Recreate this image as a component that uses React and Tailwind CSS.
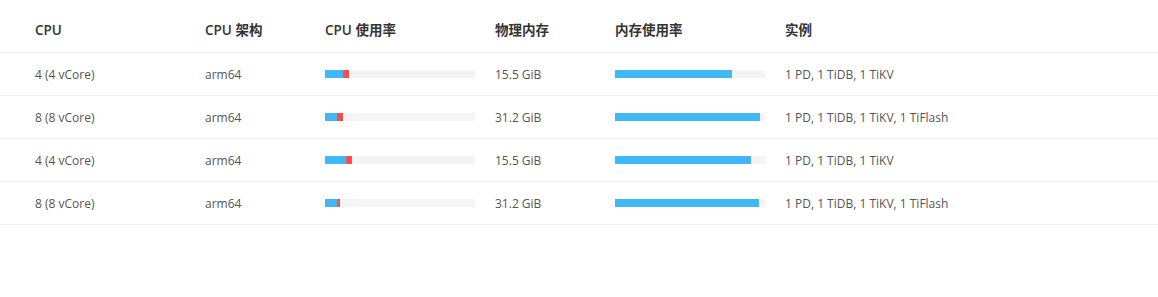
import React from "react";

const rows = [
  { cpu: "4 (4 vCore)", arch: "arm64", cpuA: 18, cpuB: 6, mem: "15.5 GiB", memU: 117, inst: "1 PD, 1 TiDB, 1 TiKV" },
  { cpu: "8 (8 vCore)", arch: "arm64", cpuA: 12, cpuB: 6, mem: "31.2 GiB", memU: 145, inst: "1 PD, 1 TiDB, 1 TiKV, 1 TiFlash" },
  { cpu: "4 (4 vCore)", arch: "arm64", cpuA: 21, cpuB: 6, mem: "15.5 GiB", memU: 136, inst: "1 PD, 1 TiDB, 1 TiKV" },
  { cpu: "8 (8 vCore)", arch: "arm64", cpuA: 12, cpuB: 3, mem: "31.2 GiB", memU: 144, inst: "1 PD, 1 TiDB, 1 TiKV, 1 TiFlash" },
];

const grid = "grid grid-cols-[170px_120px_170px_120px_170px_1fr]";

export default function App() {
  return (
    <div className="w-[1158px] h-[297px] bg-white text-[12px]" style={{ fontFamily: '"Open Sans", "Noto Sans CJK SC", sans-serif' }}>
      <div className={`${grid} h-[53px] pt-[8px] items-center border-b border-[#f0f0f0] font-semibold text-[13.5px] text-[#333]`}>
        <div className="pl-[35px]">CPU</div>
        <div className="pl-[35px]">CPU 架构</div>
        <div className="pl-[35px]">CPU 使用率</div>
        <div className="pl-[35px]">物理内存</div>
        <div className="pl-[35px]">内存使用率</div>
        <div className="pl-[35px]">实例</div>
      </div>
      {rows.map((r, i) => (
        <div key={i} className={`${grid} h-[43px] items-center border-b border-[#f0f0f0] text-[#555]`}>
          <div className="pl-[35px] pt-[2px]">{r.cpu}</div>
          <div className="pl-[35px] pt-[2px]">{r.arch}</div>
          <div className="pl-[35px]">
            <div className="flex w-[150px] h-[8px] bg-[#f4f4f4]">
              <div className="h-full bg-[#3fb8f5]" style={{ width: r.cpuA }} />
              <div className="h-full bg-[#ff4d4f]" style={{ width: r.cpuB }} />
            </div>
          </div>
          <div className="pl-[35px] pt-[2px]">{r.mem}</div>
          <div className="pl-[35px]">
            <div className="flex w-[150px] h-[8px] bg-[#f4f4f4]">
              <div className="h-full bg-[#3fb8f5]" style={{ width: r.memU }} />
            </div>
          </div>
          <div className="pl-[35px] pt-[2px]">{r.inst}</div>
        </div>
      ))}
    </div>
  );
}
